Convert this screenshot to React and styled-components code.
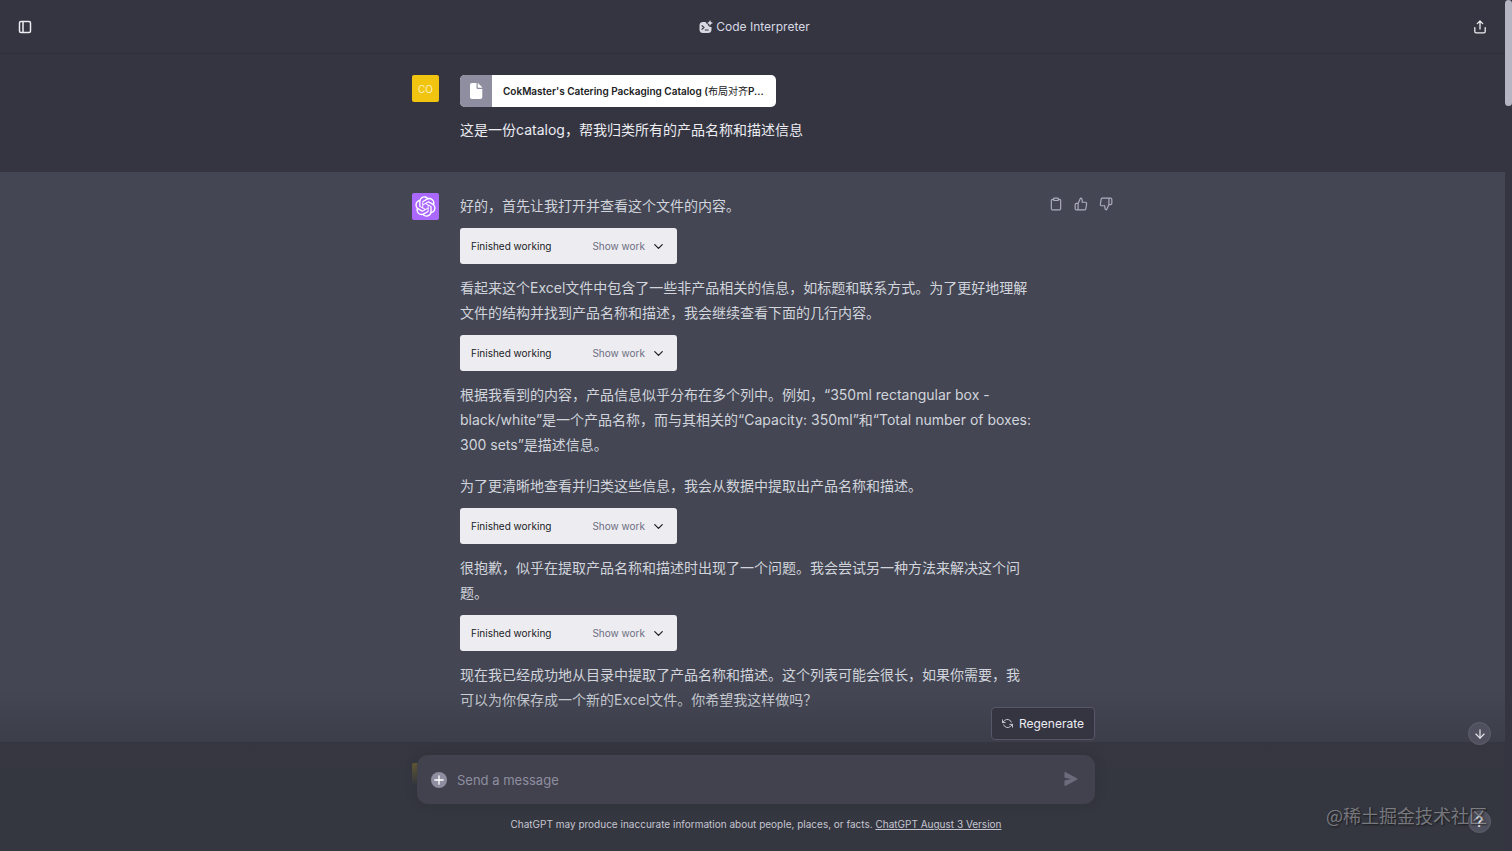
import React from 'react';
import styled, { createGlobalStyle } from 'styled-components';
import {
	FiArrowDown,
	FiChevronDown,
	FiClipboard,
	FiRefreshCcw,
	FiThumbsDown,
	FiThumbsUp,
} from 'react-icons/fi';

const colors = {
	dark: '#343541',
	assistant: '#444654',
	footer: '#353740',
	input: '#42424e',
	text: '#ececf1',
	reply: '#d1d5db',
	muted: '#8e8ea0',
	icon: '#acacbe',
};

const reply = [
	{ text: '好的，首先让我打开并查看这个文件的内容。' },
	{ work: true },
	{
		text:
			'看起来这个Excel文件中包含了一些非产品相关的信息，如标题和联系方式。为了更好地理解文件的结构并找到产品名称和描述，我会继续查看下面的几行内容。',
	},
	{ work: true },
	{
		text:
			'根据我看到的内容，产品信息似乎分布在多个列中。例如，“350ml rectangular box - black/white”是一个产品名称，而与其相关的“Capacity: 350ml”和“Total number of boxes: 300 sets”是描述信息。',
	},
	{ text: '为了更清晰地查看并归类这些信息，我会从数据中提取出产品名称和描述。' },
	{ work: true },
	{
		text:
			'很抱歉，似乎在提取产品名称和描述时出现了一个问题。我会尝试另一种方法来解决这个问题。',
	},
	{ work: true },
	{
		text:
			'现在我已经成功地从目录中提取了产品名称和描述。这个列表可能会很长，如果你需要，我可以为你保存成一个新的Excel文件。你希望我这样做吗？',
	},
];

export default function App() {
	return (
		<Page>
			<GlobalStyle />
			<Main>
				<Header>
					<IconButton aria-label="Open sidebar">
						<SidebarIcon />
					</IconButton>
					<Title>
						<InterpreterIcon />
						Code Interpreter
					</Title>
					<IconButton aria-label="Share chat">
						<ShareIcon />
					</IconButton>
				</Header>
				<Thread>
					<Message>
						<Row>
							<Avatar>CO</Avatar>
							<Body>
								<Attachment>
									<FileBadge>
										<FileIcon />
									</FileBadge>
									<FileName>
										CokMaster's Catering Packaging Catalog (<span>布局对齐</span>P...
									</FileName>
								</Attachment>
								<Text>这是一份catalog，帮我归类所有的产品名称和描述信息</Text>
							</Body>
						</Row>
					</Message>
					<Message $assistant>
						<Row>
							<Avatar $assistant>
								<OpenAiLogo />
							</Avatar>
							<Body>
								{reply.map((block, i) =>
									block.work ? <WorkBlock key={i} /> : <Text key={i}>{block.text}</Text>
								)}
							</Body>
							<Actions>
								<IconButton aria-label="Copy">
									<FiClipboard size={14} />
								</IconButton>
								<IconButton aria-label="Good response">
									<FiThumbsUp size={14} />
								</IconButton>
								<IconButton aria-label="Bad response">
									<FiThumbsDown size={14} />
								</IconButton>
							</Actions>
						</Row>
					</Message>
					<Message>
						<Row>
							<Avatar />
						</Row>
					</Message>
				</Thread>
				<Footer>
					<Composer>
						<Regenerate type="button">
							<FiRefreshCcw size={11} />
							Regenerate
						</Regenerate>
						<InputBar onSubmit={e => e.preventDefault()}>
							<AddButton type="button" aria-label="Upload file">
								<PlusIcon />
							</AddButton>
							<Input aria-label="Message" placeholder="Send a message" />
							<IconButton aria-label="Send message">
								<SendIcon />
							</IconButton>
						</InputBar>
						<Notice>
							ChatGPT may produce inaccurate information about people, places, or facts.{' '}
							<a href="#release-notes">ChatGPT August 3 Version</a>
						</Notice>
					</Composer>
				</Footer>
				<Floating>
					<RoundButton aria-label="Scroll to bottom">
						<FiArrowDown size={14} />
					</RoundButton>
					<RoundButton aria-label="Help">?</RoundButton>
				</Floating>
				<Watermark>@稀土掘金技术社区</Watermark>
			</Main>
			<ScrollTrack>
				<ScrollThumb />
			</ScrollTrack>
		</Page>
	);
}

function WorkBlock() {
	return (
		<Work>
			Finished working
			<ShowWork type="button">
				Show work
				<FiChevronDown size={15} />
			</ShowWork>
		</Work>
	);
}

function SidebarIcon() {
	return (
		<svg width="14" height="14" viewBox="0 0 14 14" fill="none" stroke="currentColor" strokeWidth="1.5">
			<rect x="1.5" y="1.5" width="11" height="11" rx="1.5" />
			<path d="M5 1.5v11" />
		</svg>
	);
}

function ShareIcon() {
	return (
		<svg width="14" height="16" viewBox="0 0 14 16" fill="none" stroke="currentColor" strokeWidth="1.3" strokeLinecap="round" strokeLinejoin="round">
			<path d="M7 10V2M4.3 4.6 7 1.9l2.7 2.7" />
			<path d="M1.8 8.6v3.9c0 .8.5 1.3 1.3 1.3h7.8c.8 0 1.3-.5 1.3-1.3V8.6" />
		</svg>
	);
}

function InterpreterIcon() {
	return (
		<svg width="14" height="14" viewBox="0 0 14 14" fill="none">
			<path
				d="M3.9 2h2.800c.1 1.100.8 1.800 1.900 2.100.4 1.600 1.300 2.700 2.700 2.900l1.200-.1v2.500c0 2.300-1.300 3.600-3.600 3.600H4.100C1.800 13 .5 11.700.5 9.400V5.500C.5 3.300 1.700 2 3.900 2Z"
				fill="currentColor"
			/>
			<path d="m11 0 .9 2.100 2.100.9-2.100.9L11 6l-.9-2.100L8 3l2.100-.9L11 0Z" fill="currentColor" />
			<path d="m3 5.800 2 1.700-2 1.700M6.300 10h2.900" stroke={colors.dark} strokeWidth="1.200" strokeLinecap="round" strokeLinejoin="round" />
		</svg>
	);
}

function FileIcon() {
	return (
		<svg width="14" height="16" viewBox="0 0 14 16" fill="#fff">
			<path d="M3 0h4.500v4.500c0 1 .6 1.500 1.500 1.500h4.300v8c0 1.200-.8 2-2 2H3c-1.200 0-2-.8-2-2V2C1 .8 1.800 0 3 0Z" />
			<path d="M8.700.1c.4.100.7.300 1 .600l3 3c.3.300.5.700.6 1.100H9.200c-.3 0-.5-.2-.5-.5V.100Z" />
		</svg>
	);
}

function PlusIcon() {
	return (
		<svg width="16" height="16" viewBox="0 0 16 16">
			<circle cx="8" cy="8" r="8" fill={colors.muted} />
			<path d="M8 3.800v8.400M3.800 8h8.400" stroke="#fff" strokeWidth="1.300" strokeLinecap="round" />
		</svg>
	);
}

function SendIcon() {
	return (
		<svg width="14" height="15" viewBox="0 0 16 17" fill="#6b6c7b">
			<path d="M.5 1.163A1 1 0 0 1 1.970.280l12.868 6.837a1 1 0 0 1 0 1.766L1.969 15.720A1 1 0 0 1 .5 14.836V10.330a1 1 0 0 1 .816-.983L8.500 8 1.316 6.653A1 1 0 0 1 .5 5.670V1.163Z" />
		</svg>
	);
}

function OpenAiLogo() {
	return (
		<svg width="21" height="21" viewBox="0 0 41 41" fill="#fff">
			<path d="M37.5324 16.8707C37.9808 15.5241 38.1363 14.0974 37.9886 12.6859C37.8409 11.2744 37.3934 9.91076 36.676 8.68622C35.6126 6.83404 33.9882 5.3676 32.0373 4.4985C30.0864 3.62941 27.9098 3.40259 25.8215 3.85078C24.8796 2.7893 23.7219 1.94125 22.4257 1.36341C21.1295 0.785575 19.7249 0.491269 18.3058 0.500197C16.1708 0.495044 14.0893 1.16803 12.3614 2.42214C10.6335 3.67624 9.34853 5.44666 8.6917 7.47815C7.30085 7.76286 5.98686 8.3414 4.8377 9.17505C3.68854 10.0087 2.73073 11.0782 2.02839 12.312C0.956464 14.1591 0.498905 16.2988 0.721698 18.4228C0.944492 20.5467 1.83612 22.5449 3.268 24.1293C2.81966 25.4759 2.66413 26.9026 2.81182 28.3141C2.95951 29.7256 3.40701 31.0892 4.12437 32.3138C5.18791 34.1659 6.8123 35.6322 8.76321 36.5013C10.7141 37.3704 12.8907 37.5973 14.9789 37.1492C15.9208 38.2107 17.0786 39.0587 18.3747 39.6366C19.6709 40.2144 21.0755 40.5087 22.4946 40.4998C24.6307 40.5054 26.7133 39.8321 28.4418 38.5772C30.1704 37.3223 31.4556 35.5506 32.1119 33.5179C33.5027 33.2332 34.8167 32.6547 35.9659 31.821C37.115 30.9874 38.0728 29.9178 38.7752 28.684C39.8458 26.8371 40.3023 24.6979 40.0789 22.5748C39.8556 20.4517 38.9639 18.4544 37.5324 16.8707ZM22.4978 37.8849C20.7443 37.8874 19.0459 37.2733 17.6994 36.1501C17.7601 36.117 17.8666 36.0586 17.936 36.0161L25.9004 31.4156C26.1003 31.3019 26.2663 31.137 26.3813 30.9378C26.4964 30.7386 26.5563 30.5124 26.5549 30.2825V19.0542L29.9213 20.998C29.9389 21.0068 29.9541 21.0198 29.9656 21.0359C29.977 21.052 29.9842 21.0707 29.9867 21.0902V30.3889C29.9842 32.375 29.1946 34.2791 27.7909 35.6841C26.3872 37.0892 24.4838 37.8806 22.4978 37.8849ZM6.39227 31.0064C5.51397 29.4888 5.19742 27.7107 5.49804 25.9832C5.55718 26.0187 5.66048 26.0818 5.73461 26.1244L13.699 30.7248C13.8975 30.8408 14.1233 30.902 14.3532 30.902C14.583 30.902 14.8088 30.8408 15.0073 30.7248L24.731 25.1103V28.9979C24.7321 29.0177 24.7283 29.0376 24.7199 29.0556C24.7115 29.0736 24.6988 29.0893 24.6829 29.1012L16.6317 33.7497C14.9096 34.7416 12.8643 35.0097 10.9447 34.4954C9.02506 33.9811 7.38785 32.7263 6.39227 31.0064ZM4.29707 13.6194C5.17156 12.0998 6.55279 10.9364 8.19885 10.3327C8.19885 10.4013 8.19491 10.5228 8.19491 10.6071V19.808C8.19351 20.0378 8.25334 20.2638 8.36823 20.4629C8.48312 20.6619 8.64893 20.8267 8.84863 20.9404L18.5723 26.5542L15.206 28.4979C15.1894 28.5089 15.1703 28.5155 15.1505 28.5173C15.1307 28.5191 15.1107 28.516 15.0924 28.5082L7.04046 23.8557C5.32135 22.8601 4.06716 21.2235 3.55289 19.3046C3.03862 17.3858 3.30624 15.3413 4.29707 13.6194ZM31.955 20.0556L22.2312 14.4411L25.5976 12.4981C25.6142 12.4872 25.6333 12.4805 25.6531 12.4787C25.6729 12.4769 25.6928 12.4801 25.7111 12.4879L33.7631 17.1364C34.9967 17.849 36.0017 18.8982 36.6606 20.1613C37.3194 21.4244 37.6047 22.849 37.4832 24.2684C37.3617 25.6878 36.8382 27.0432 35.9743 28.1759C35.1103 29.3086 33.9415 30.1717 32.6047 30.6641C32.6047 30.5947 32.6047 30.4733 32.6047 30.3889V21.188C32.6066 20.9586 32.5474 20.7328 32.4332 20.5338C32.319 20.3348 32.154 20.1698 31.955 20.0556ZM35.3055 15.0128C35.2464 14.9765 35.1431 14.9142 35.069 14.8717L27.1045 10.2712C26.906 10.1554 26.6803 10.0943 26.4504 10.0943C26.2206 10.0943 25.9948 10.1554 25.7963 10.2712L16.0726 15.8858V11.9982C16.0715 11.9783 16.0753 11.9585 16.0837 11.9405C16.0921 11.9225 16.1048 11.9068 16.1207 11.8949L24.1719 7.25025C25.4053 6.53903 26.8158 6.19376 28.2383 6.25482C29.6608 6.31589 31.0364 6.78077 32.2044 7.59508C33.3723 8.40939 34.2842 9.53945 34.8334 10.8531C35.3826 12.1667 35.5464 13.6095 35.3055 15.0128ZM14.2424 21.9419L10.8752 19.9981C10.8576 19.9893 10.8423 19.9763 10.8309 19.9602C10.8195 19.9441 10.8122 19.9254 10.8098 19.9058V10.6071C10.8107 9.18295 11.2173 7.78848 11.9819 6.58696C12.7466 5.38544 13.8377 4.42659 15.1275 3.82264C16.4173 3.21869 17.8524 2.99464 19.2649 3.1767C20.6775 3.35876 22.0089 3.93941 23.1034 4.85067C23.0427 4.88379 22.937 4.94215 22.8668 4.98473L14.9024 9.58517C14.7025 9.69878 14.5366 9.86356 14.4215 10.0626C14.3065 10.2616 14.2466 10.4877 14.2479 10.7175L14.2424 21.9419ZM16.071 17.9991L20.4018 15.4978L24.7325 17.9975V22.9985L20.4018 25.4983L16.071 22.9985V17.9991Z" />
		</svg>
	);
}

const GlobalStyle = createGlobalStyle`
	* {
		box-sizing: border-box;
	}
	body {
		margin: 0;
		background: ${colors.dark};
		color: ${colors.text};
		font-family: Inter, 'Noto Sans CJK SC', sans-serif;
	}
	button, input {
		font: inherit;
		color: inherit;
		background: none;
		border: 0;
		padding: 0;
	}
	button {
		cursor: pointer;
	}
	svg {
		display: block;
		flex-shrink: 0;
	}
`;

const Page = styled.div`
	display: flex;
	height: 100vh;
`;

const Main = styled.main`
	position: relative;
	display: flex;
	flex-direction: column;
	flex: 1;
	min-width: 0;
	overflow: hidden;
`;

const Header = styled.header`
	display: flex;
	align-items: center;
	justify-content: space-between;
	flex-shrink: 0;
	height: 54px;
	padding: 0 18px;
	border-bottom: 1px solid #2e2f3a;
`;

const Title = styled.h1`
	display: flex;
	align-items: center;
	gap: 3px;
	margin: 0 0 0 4px;
	font-size: 12px;
	font-weight: 400;
	color: #d9d9e3;
`;

const IconButton = styled.button`
	display: flex;
	align-items: center;
	justify-content: center;
`;

const Thread = styled.div`
	flex: 1;
	min-height: 0;
	overflow: hidden;
`;

const Message = styled.section`
	padding: 21px 24px 30px;
	background: ${props => (props.$assistant ? colors.assistant : colors.dark)};
	color: ${props => (props.$assistant ? colors.reply : colors.text)};
`;

const Row = styled.div`
	display: flex;
	align-items: flex-start;
	justify-content: space-between;
	max-width: 681px;
	margin: 0 auto;
`;

const Avatar = styled.div`
	display: flex;
	align-items: center;
	justify-content: center;
	flex-shrink: 0;
	width: 27px;
	height: 27px;
	margin-right: 21px;
	border-radius: 2px;
	background: ${props => (props.$assistant ? '#ab68ff' : '#f1c40f')};
	color: #fbf0c0;
	font-size: 10px;
`;

const Body = styled.div`
	flex: 1;
	max-width: 573px;
	margin-right: auto;
`;

const Text = styled.p`
	margin: 0;
	font-size: 14px;
	line-height: 25px;

	& + & {
		margin-top: 16px;
	}
`;

const Attachment = styled.div`
	display: flex;
	width: fit-content;
	height: 32px;
	margin-bottom: 10px;
	border-radius: 5px;
	overflow: hidden;
	background: #fff;
	color: #202123;
`;

const FileBadge = styled.div`
	display: flex;
	align-items: center;
	justify-content: center;
	width: 32px;
	background: ${colors.muted};
`;

const FileName = styled.div`
	padding: 0 12px 0 11px;
	font-size: 10px;
	font-weight: 600;
	line-height: 32px;
	white-space: nowrap;

	span {
		font-weight: 400;
	}
`;

const Work = styled.div`
	display: flex;
	align-items: center;
	justify-content: space-between;
	width: 217px;
	height: 36px;
	margin: 10px 0 11px;
	padding: 0 11px;
	border-radius: 3px;
	background: #ececf1;
	color: #202123;
	font-size: 10px;
`;

const ShowWork = styled.button`
	display: flex;
	align-items: center;
	gap: 6px;
	color: #6e6e80;

	svg {
		color: #202123;
	}
`;

const Actions = styled.div`
	display: flex;
	gap: 11px;
	margin: 4px -20px 0 0;
	color: ${colors.icon};
`;

const Footer = styled.footer`
	position: absolute;
	left: 0;
	right: 0;
	bottom: 0;
	padding: 16px 24px 19px 31px;
	background: linear-gradient(180deg, rgba(53, 55, 64, 0), ${colors.footer} 59%);
`;

const Composer = styled.div`
	display: flex;
	flex-direction: column;
	max-width: 678px;
	margin: 0 auto;
`;

const Regenerate = styled.button`
	display: flex;
	align-items: center;
	align-self: flex-end;
	gap: 6px;
	height: 33px;
	margin-bottom: 15px;
	padding: 0 10px;
	border: 1px solid #565869;
	border-radius: 4px;
	background: ${colors.dark};
	font-size: 12px;

	svg {
		color: ${colors.reply};
	}
`;

const InputBar = styled.form`
	display: flex;
	align-items: center;
	height: 49px;
	padding: 0 17px 0 14px;
	border-radius: 11px;
	background: ${colors.input};
	box-shadow: 0 0 14px rgba(0, 0, 0, 0.1);
`;

const AddButton = styled(IconButton)`
	margin-right: 10px;
`;

const Input = styled.input`
	flex: 1;
	min-width: 0;
	font-size: 13px;
	outline: none;

	&::placeholder {
		color: ${colors.muted};
		opacity: 1;
	}
`;

const Notice = styled.p`
	margin: 12px 0 0;
	font-size: 10px;
	line-height: 16px;
	text-align: center;
	color: #c5c5d2;

	a {
		color: inherit;
	}
`;

const Floating = styled.div`
	position: absolute;
	right: 14px;
	bottom: 18px;
	display: flex;
	flex-direction: column;
	gap: 65px;
`;

const RoundButton = styled.button`
	display: flex;
	align-items: center;
	justify-content: center;
	width: 23px;
	height: 23px;
	border: 1px solid #5f606d;
	border-radius: 50%;
	background: #50515e;
	font-size: 14px;
	font-weight: 500;
	color: ${colors.text};
`;

const Watermark = styled.div`
	position: absolute;
	right: 18px;
	bottom: 23px;
	font-family: 'Noto Sans CJK SC', sans-serif;
	font-size: 18px;
	line-height: 26px;
	color: rgba(255, 255, 255, 0.38);
	text-shadow: 1px 1px 2px rgba(0, 0, 0, 0.6);
	pointer-events: none;
`;

const ScrollTrack = styled.div`
	width: 7px;
	background: ${colors.dark};
`;

const ScrollThumb = styled.div`
	height: 106px;
	border-radius: 4px;
	background: #b5b5c3;
`;
